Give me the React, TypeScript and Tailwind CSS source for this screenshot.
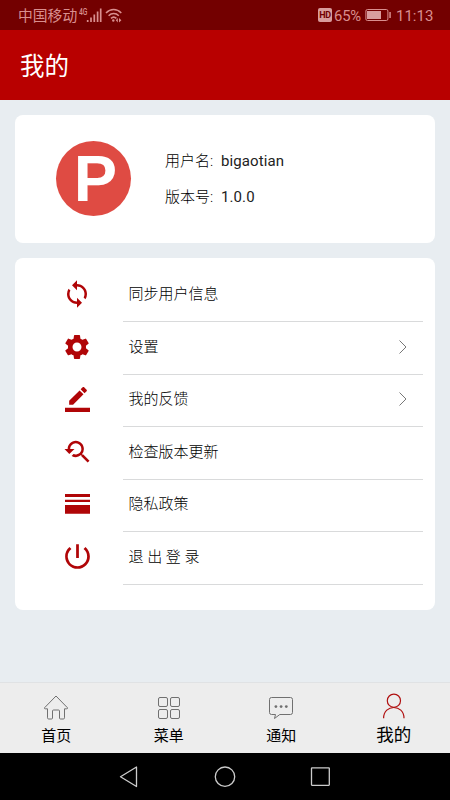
import React from 'react';
import {
  MdSync,
  MdSettings,
  MdYoutubeSearchedFor,
  MdPowerSettingsNew,
} from 'react-icons/md';

function StatusBar() {
  return (
    <div className="flex h-[30px] items-center bg-[#730000] pl-[18px] pr-[17px] text-[#d98f8f]">
      <span className="mt-[3px] text-[14.8px] leading-none">中国移动</span>
      <svg className="ml-[2px] mt-px" width="46" height="18" viewBox="0 0 46 18" fill="none">
        <text x="0" y="7.5" fontSize="8.5" fontWeight="500" fill="currentColor" textLength="8.5" lengthAdjust="spacingAndGlyphs">4G</text>
        <path d="M8.700 15v-2M12 15v-4.500M15.300 15V7.500M18.600 15V4.600M21.700 15V1.500" stroke="currentColor" strokeWidth="1.700" />
        <path d="M27 6c4.500-4.600 10.800-4.600 15.300 0M29.600 8.700c3-3 7.200-3 10.200 0M32 11.400c1.700-1.600 3.700-1.600 5.400 0" stroke="currentColor" strokeWidth="1.500" />
        <circle cx="34.300" cy="13.500" r="1.200" fill="currentColor" />
        <path d="M38.800 11v4.500l-2-2.200zM40 11v4.500l2.400-2.200z" fill="currentColor" />
      </svg>
      <div className="ml-auto flex items-center">
        <span className="flex h-[14px] w-[14px] items-center justify-center rounded-[2px] bg-[#d99d9d] text-[9px] font-bold leading-none tracking-[-0.3px] text-[#730000]">HD</span>
        <span className="ml-[2px] mt-[2px] w-[28px] text-[14.800px] leading-none tracking-[-0.150px]">65%</span>
        <svg className="ml-[3px]" width="27" height="12" viewBox="0 0 27 12">
          <rect x="0.900" y="0.500" width="22" height="11" rx="1.500" fill="none" stroke="currentColor" />
          <rect x="2" y="2" width="14" height="8" fill="#d99d9d" />
          <rect x="24.300" y="3" width="1.500" height="6" fill="currentColor" />
        </svg>
        <span className="ml-[4px] mt-[2px] w-[37px] whitespace-nowrap text-[15px] leading-none">11:13</span>
      </div>
    </div>
  );
}

function PencilIcon() {
  return (
    <svg width="25" height="25" viewBox="0 0 24 24" fill="currentColor">
      <path d="M17.750 7L14 3.250l-10 10V17h3.750l10-10zM20.710 4.040c.39-.39.39-1.020 0-1.410L18.370.290c-.39-.39-1.020-.39-1.410 0L15 2.250 18.750 6l1.960-1.960zM0 20h24v4H0z" />
    </svg>
  );
}

function BarsIcon() {
  return (
    <svg width="25" height="20" viewBox="0 0 25 20" fill="currentColor">
      <path d="M0 0h25v2.900H0zM0 5.700h25v2.400H0zM0 11h25v8.700H0z" />
    </svg>
  );
}

const rows = [
  { label: '同步用户信息', icon: <MdSync size={30} />, arrow: false },
  { label: '设置', icon: <MdSettings size={30} />, arrow: true },
  { label: '我的反馈', icon: <PencilIcon />, arrow: true },
  { label: '检查版本更新', icon: <MdYoutubeSearchedFor size={30} />, arrow: false },
  { label: '隐私政策', icon: <BarsIcon />, arrow: false },
  { label: '退 出 登 录', icon: <MdPowerSettingsNew size={33} />, arrow: false },
];

function HomeIcon() {
  return (
    <svg width="26" height="26" viewBox="0 0 26 26" fill="none" stroke="currentColor" strokeWidth="1" strokeLinejoin="round">
      <path d="M13 1L1.500 12.800q-.3 1 .8 1H4.500v9q0 1.200 1.200 1.200h2.800q1 0 1-1V16q0-1 1-1h5q1 0 1 1v7q0 1 1 1h2.800q1.200 0 1.200-1.200v-9h2.200q1.100 0 .8-1z" />
    </svg>
  );
}

function GridIcon() {
  return (
    <svg width="26" height="26" viewBox="0 0 26 26" fill="none" stroke="currentColor" strokeWidth="1">
      <rect x="2.500" y="2.500" width="9" height="9" rx="1.500" />
      <rect x="14.500" y="2.500" width="9" height="9" rx="1.500" />
      <rect x="2.500" y="14.500" width="9" height="9" rx="1.500" />
      <rect x="14.500" y="14.500" width="9" height="9" rx="1.500" />
    </svg>
  );
}

function ChatIcon() {
  return (
    <svg width="26" height="26" viewBox="0 0 26 26" fill="none" stroke="currentColor" strokeWidth="1" strokeLinejoin="round">
      <path d="M3.500 2.500h19q2 0 2 2v13q0 2-2 2H11.800l-5.300 4 1-4h-4q-2 0-2-2v-13q0-2 2-2z" />
      <g fill="currentColor" stroke="none">
        <circle cx="7.900" cy="11.600" r="1.400" />
        <circle cx="13.100" cy="11.600" r="1.400" />
        <circle cx="18.300" cy="11.600" r="1.400" />
      </g>
    </svg>
  );
}

function PersonIcon() {
  return (
    <svg width="26" height="26" viewBox="0 0 26 26" fill="none" stroke="#b01010" strokeWidth="1.200">
      <circle cx="12.900" cy="7.700" r="6.600" />
      <path d="M2.600 25.200c0-14.300 20.400-14.300 20.400 0" />
    </svg>
  );
}

const tabs = [
  { label: '首页', icon: <HomeIcon /> },
  { label: '菜单', icon: <GridIcon /> },
  { label: '通知', icon: <ChatIcon /> },
];

export default function App() {
  return (
    <div className="flex h-[800px] w-[450px] flex-col overflow-hidden bg-[#e8edf1] font-[Roboto,'Noto_Sans_CJK_SC',sans-serif]">
      <StatusBar />
      <header className="flex h-[70px] items-center bg-[#b80000] pl-[20px] text-[24.500px] leading-none text-white">
        <h1 className="mt-[5px]">我的</h1>
      </header>

      <main className="flex flex-1 flex-col gap-[15px] px-[15px] pt-[15px]">
        <section className="flex h-[127.500px] rounded-[8px] bg-white">
          <div className="ml-[41px] mt-[26px] flex h-[75px] w-[75px] items-center justify-center rounded-full bg-[#df4b43]">
            <span className="ml-[4px] font-['Liberation_Sans',sans-serif] text-[65px] font-bold leading-none text-white">P</span>
          </div>
          <div className="ml-[34px] mt-[28px] text-[15px] text-[#222]">
            <p className="flex h-[36px] items-center"><span className="w-[56px] whitespace-nowrap font-light text-black">用户名:</span><span className="tracking-[0.100px]">bigaotian</span></p>
            <p className="flex h-[36px] items-center"><span className="w-[56px] whitespace-nowrap font-light text-black">版本号:</span><span className="tracking-[0.100px]">1.0.0</span></p>
          </div>
        </section>

        <section className="h-[352.500px] rounded-[8px] bg-white pl-[15px] pr-[12.500px] pt-[12px]">
          {rows.map((row) => (
            <div key={row.label} className="flex h-[52.500px]">
              <div className="flex w-[92.500px] items-center justify-center pb-[3px] pl-[2px] text-[#b00507]">{row.icon}</div>
              <div className="flex flex-1 items-center justify-between border-b border-[#d9dadb] pb-[2px] pl-[6px] pr-[15px] text-[15px] font-light text-black">
                <span>{row.label}</span>
                {row.arrow && (
                  <svg width="10" height="16" viewBox="0 0 10 16" fill="none" stroke="#777" strokeWidth="1">
                    <path d="M1.500 1.500L8 8l-6.500 6.500" />
                  </svg>
                )}
              </div>
            </div>
          ))}
        </section>
      </main>

      <nav className="flex h-[71px] border-t border-[#e0e2e4] bg-[#ededed]">
        {tabs.map((tab) => (
          <div key={tab.label} className="flex flex-1 flex-col items-center pt-[12px] text-[#707070]">
            {tab.icon}
            <span className="mt-[6px] text-[15px] leading-[18px] text-black">{tab.label}</span>
          </div>
        ))}
        <div className="flex flex-1 flex-col items-center pt-[10px]">
          <PersonIcon />
          <span className="mt-[6px] text-[17.500px] leading-[20px] text-black">我的</span>
        </div>
      </nav>

      <footer className="flex h-[47px] items-center justify-center gap-[72px] bg-black">
        <svg width="24" height="24" viewBox="0 0 24 24" fill="none" stroke="#ccc" strokeWidth="1.300" strokeLinejoin="round">
          <path d="M19.500 2v19.500L3.500 11.700z" />
        </svg>
        <svg width="24" height="24" viewBox="0 0 24 24" fill="none" stroke="#ccc" strokeWidth="1.300">
          <circle cx="12" cy="11.700" r="9.700" />
        </svg>
        <svg width="24" height="24" viewBox="0 0 24 24" fill="none" stroke="#ccc" strokeWidth="1.300">
          <rect x="2.500" y="2.800" width="17.800" height="17.500" rx="0.500" />
        </svg>
      </footer>
    </div>
  );
}
